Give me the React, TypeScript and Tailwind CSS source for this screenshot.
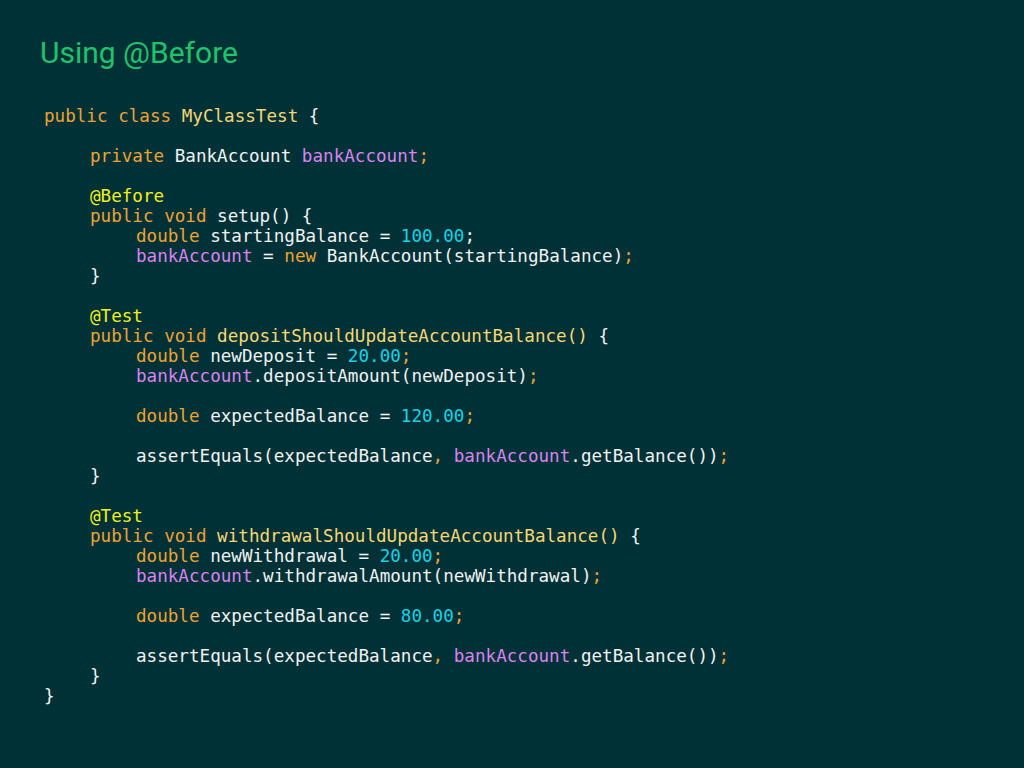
type Tok = [string, string]

const K = 'text-[#eda333]'
const Y = 'text-[#f7d774]'
const W = 'text-[#f2f2f2]'
const P = 'text-[#d983f0]'
const C = 'text-[#14d4e6]'
const A = 'text-[#f0f01e]'

const lines: { indent: number; toks: Tok[] }[] = [
  { indent: 0, toks: [[K, 'public class '], [Y, 'MyClassTest'], [W, ' {']] },
  { indent: 0, toks: [] },
  { indent: 1, toks: [[K, 'private '], [W, 'BankAccount '], [P, 'bankAccount'], [K, ';']] },
  { indent: 0, toks: [] },
  { indent: 1, toks: [[A, '@Before']] },
  { indent: 1, toks: [[K, 'public void '], [W, 'setup() {']] },
  { indent: 2, toks: [[K, 'double '], [W, 'startingBalance = '], [C, '100.00'], [W, ';']] },
  { indent: 2, toks: [[P, 'bankAccount'], [W, ' = '], [K, 'new '], [W, 'BankAccount(startingBalance)'], [K, ';']] },
  { indent: 1, toks: [[W, '}']] },
  { indent: 0, toks: [] },
  { indent: 1, toks: [[A, '@Test']] },
  { indent: 1, toks: [[K, 'public void '], [Y, 'depositShouldUpdateAccountBalance()'], [W, ' {']] },
  { indent: 2, toks: [[K, 'double '], [W, 'newDeposit = '], [C, '20.00'], [K, ';']] },
  { indent: 2, toks: [[P, 'bankAccount'], [W, '.depositAmount(newDeposit)'], [K, ';']] },
  { indent: 0, toks: [] },
  { indent: 2, toks: [[K, 'double '], [W, 'expectedBalance = '], [C, '120.00'], [K, ';']] },
  { indent: 0, toks: [] },
  { indent: 2, toks: [[W, 'assertEquals(expectedBalance'], [K, ', '], [P, 'bankAccount'], [W, '.getBalance())'], [K, ';']] },
  { indent: 1, toks: [[W, '}']] },
  { indent: 0, toks: [] },
  { indent: 1, toks: [[A, '@Test']] },
  { indent: 1, toks: [[K, 'public void '], [Y, 'withdrawalShouldUpdateAccountBalance()'], [W, ' {']] },
  { indent: 2, toks: [[K, 'double '], [W, 'newWithdrawal = '], [C, '20.00'], [K, ';']] },
  { indent: 2, toks: [[P, 'bankAccount'], [W, '.withdrawalAmount(newWithdrawal)'], [K, ';']] },
  { indent: 0, toks: [] },
  { indent: 2, toks: [[K, 'double '], [W, 'expectedBalance = '], [C, '80.00'], [K, ';']] },
  { indent: 0, toks: [] },
  { indent: 2, toks: [[W, 'assertEquals(expectedBalance'], [K, ', '], [P, 'bankAccount'], [W, '.getBalance())'], [K, ';']] },
  { indent: 1, toks: [[W, '}']] },
  { indent: 0, toks: [[W, '}']] },
]

const pad = ['pl-0', 'pl-[46px]', 'pl-[92px]']

export default function App() {
  return (
    <div className="w-[1024px] h-[768px] bg-[#003136] overflow-hidden pl-10 pt-[36px]">
      <h1 className="font-['Roboto',sans-serif] text-[30px] leading-[34px] text-[#1ec36b]">
        Using @Before
      </h1>
      <div className="mt-[36px] ml-1 font-['DejaVu_Sans_Mono',monospace] text-[17.6px] leading-[20px] whitespace-pre">
        {lines.map((l, i) => (
          <div key={i} className={`h-[20px] ${pad[l.indent]}`}>
            {l.toks.map((t, j) => (
              <span key={j} className={t[0]}>{t[1]}</span>
            ))}
          </div>
        ))}
      </div>
    </div>
  )
}
